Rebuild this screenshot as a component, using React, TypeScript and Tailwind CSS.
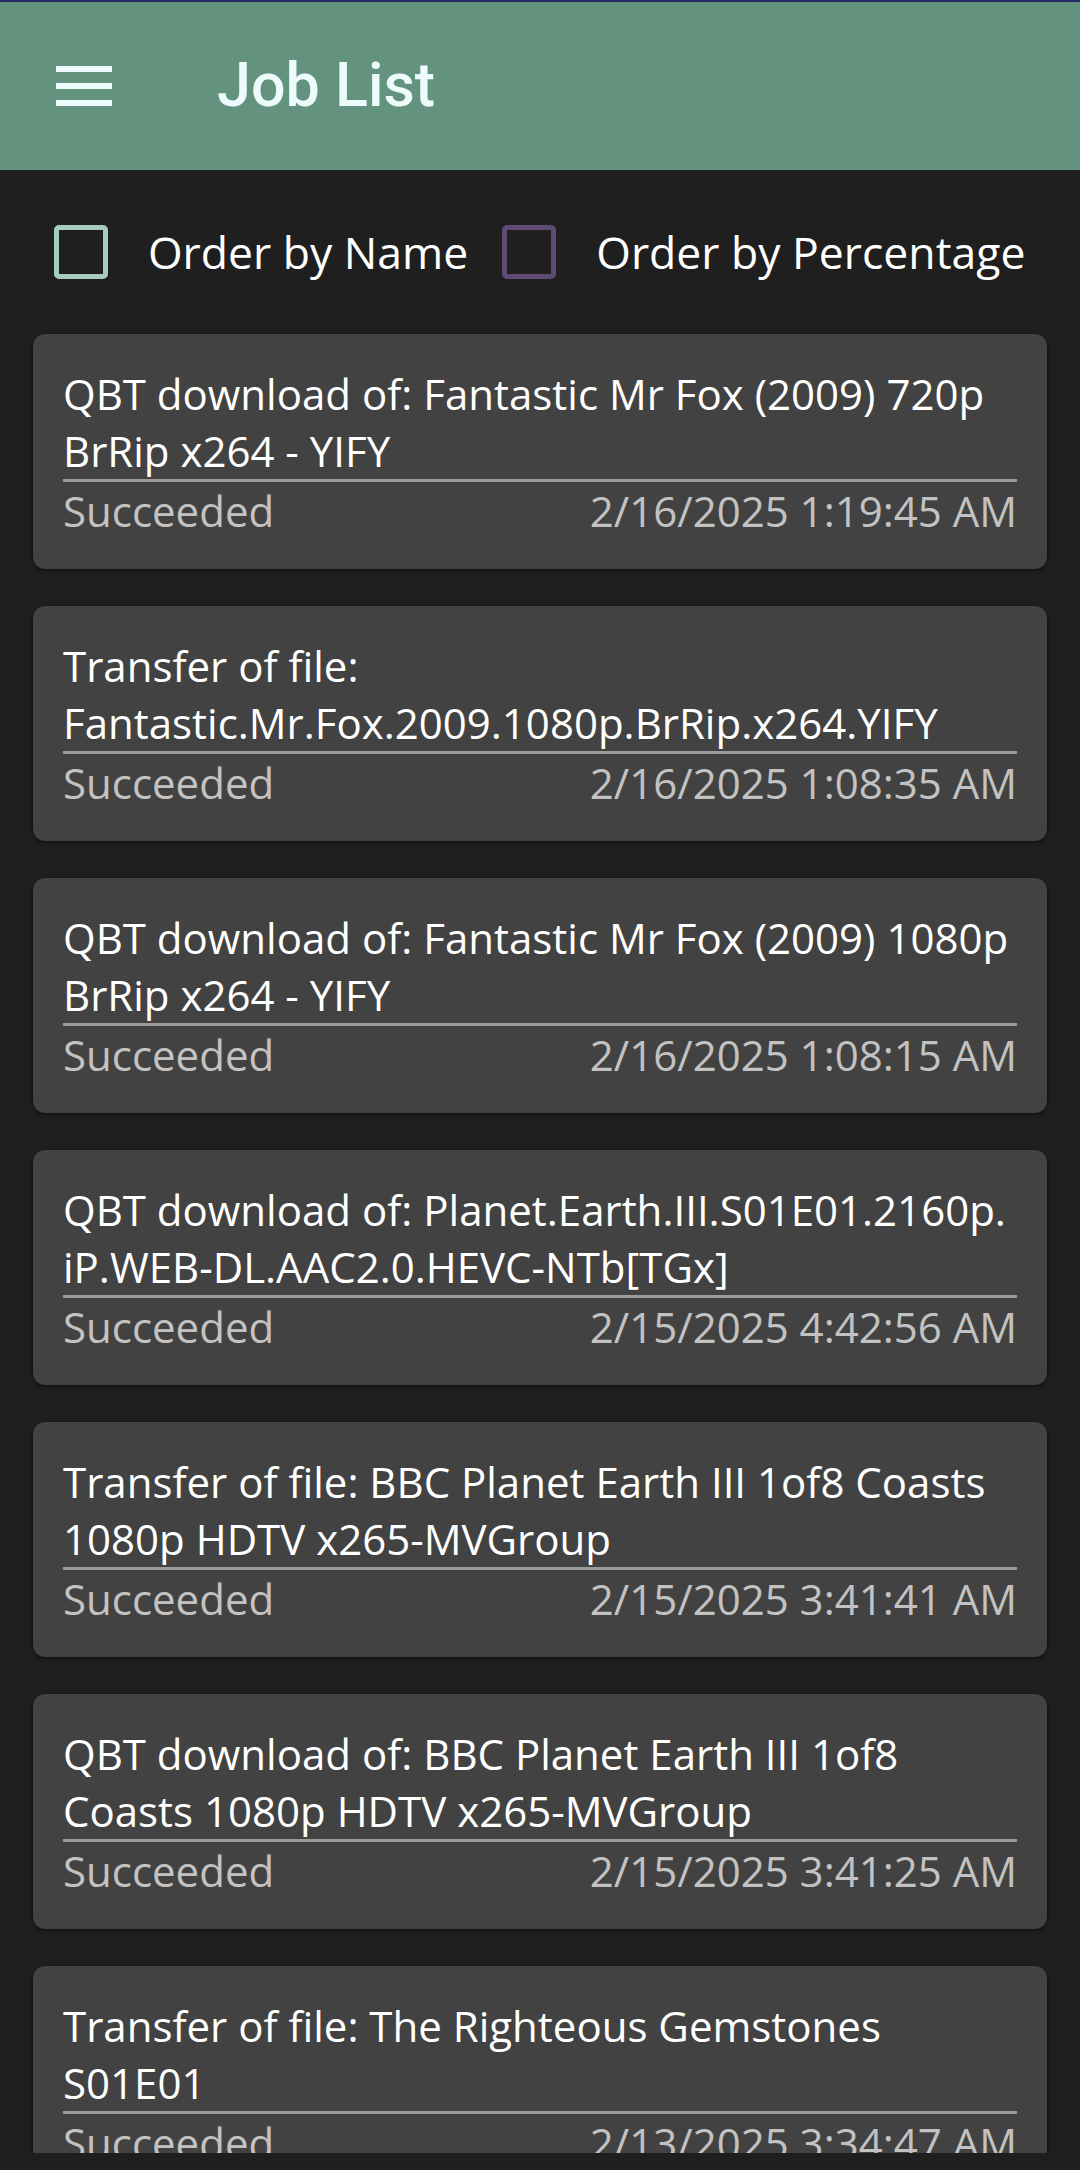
import React from 'react';

type Job = {
  title: string;
  status: string;
  date: string;
};

const JOBS: Job[] = [
  { title: 'QBT download of: Fantastic Mr Fox (2009) 720p BrRip x264 - YIFY', status: 'Succeeded', date: '2/16/2025 1:19:45 AM' },
  { title: 'Transfer of file: Fantastic.Mr.Fox.2009.1080p.BrRip.x264.YIFY', status: 'Succeeded', date: '2/16/2025 1:08:35 AM' },
  { title: 'QBT download of: Fantastic Mr Fox (2009) 1080p BrRip x264 - YIFY', status: 'Succeeded', date: '2/16/2025 1:08:15 AM' },
  { title: 'QBT download of: Planet.Earth.III.S01E01.2160p.\u200BiP.WEB\u2011DL.AAC2.0.HEVC\u2011NTb[TGx]', status: 'Succeeded', date: '2/15/2025 4:42:56 AM' },
  { title: 'Transfer of file: BBC Planet Earth III 1of8 Coasts 1080p HDTV x265-MVGroup', status: 'Succeeded', date: '2/15/2025 3:41:41 AM' },
  { title: 'QBT download of: BBC Planet Earth III 1of8 Coasts 1080p HDTV x265-MVGroup', status: 'Succeeded', date: '2/15/2025 3:41:25 AM' },
  { title: 'Transfer of file: The Righteous Gemstones S01E01', status: 'Succeeded', date: '2/13/2025 3:34:47 AM' },
];

function HamburgerIcon() {
  return (
    <div className="flex w-[56px] flex-col gap-[11px]">
      <span className="block h-[6px] w-full bg-[#eefbfd]" />
      <span className="block h-[6px] w-full bg-[#eefbfd]" />
      <span className="block h-[6px] w-full bg-[#eefbfd]" />
    </div>
  );
}

function OrderCheckbox({ label, boxClass }: { label: string; boxClass: string }) {
  return (
    <label className="flex items-center">
      <span className={`block h-[54px] w-[54px] rounded-[5px] border-[5px] ${boxClass}`} />
      <span className="ml-[40px] text-[44.5px] leading-[60px] text-white">{label}</span>
    </label>
  );
}

function JobCard({ job }: { job: Job }) {
  return (
    <div className="rounded-[12px] bg-[#424242] px-[30px] pt-[31px] pb-[30px] shadow-[0_1px_4px_rgba(0,0,0,0.7)]">
      <p className="text-[42px] leading-[57px] text-white">{job.title}</p>
      <div className="h-[3px] bg-[#9b9b9b]" />
      <div className="flex justify-between text-[42px] leading-[57px] text-[#c2c2c2]">
        <span>{job.status}</span>
        <span>{job.date}</span>
      </div>
    </div>
  );
}

export default function App() {
  return (
    <div
      className="flex h-[2170px] w-[1080px] flex-col overflow-hidden bg-[#1f1f1f]"
      style={{ fontFamily: '"Open Sans", "Noto Sans", sans-serif' }}
    >
      {/* Toolbar */}
      <header className="flex h-[170px] shrink-0 items-center border-t-[2px] border-[#232c66] bg-[#63927f] pl-[56px]">
        <HamburgerIcon />
        <h1
          className="ml-[105px] text-[61px] font-medium text-[#eefbfd]"
          style={{ fontFamily: 'Roboto, "Liberation Sans", sans-serif' }}
        >
          Job List
        </h1>
      </header>

      <div className="flex min-h-0 flex-1 flex-col overflow-hidden">
        {/* Sort options */}
        <div className="flex h-[164px] shrink-0 items-center gap-[34px] pl-[54px]">
          <OrderCheckbox label="Order by Name" boxClass="border-[#a6ccc0]" />
          <OrderCheckbox label="Order by Percentage" boxClass="border-[#5f4b73]" />
        </div>

        {/* Jobs */}
        <div className="flex flex-col gap-[37px] px-[33px]">
          {JOBS.map((job, i) => (
            <JobCard key={i} job={job} />
          ))}
        </div>
      </div>

      <div className="h-[17px] shrink-0 bg-[#1e1e1e]" />
    </div>
  );
}
